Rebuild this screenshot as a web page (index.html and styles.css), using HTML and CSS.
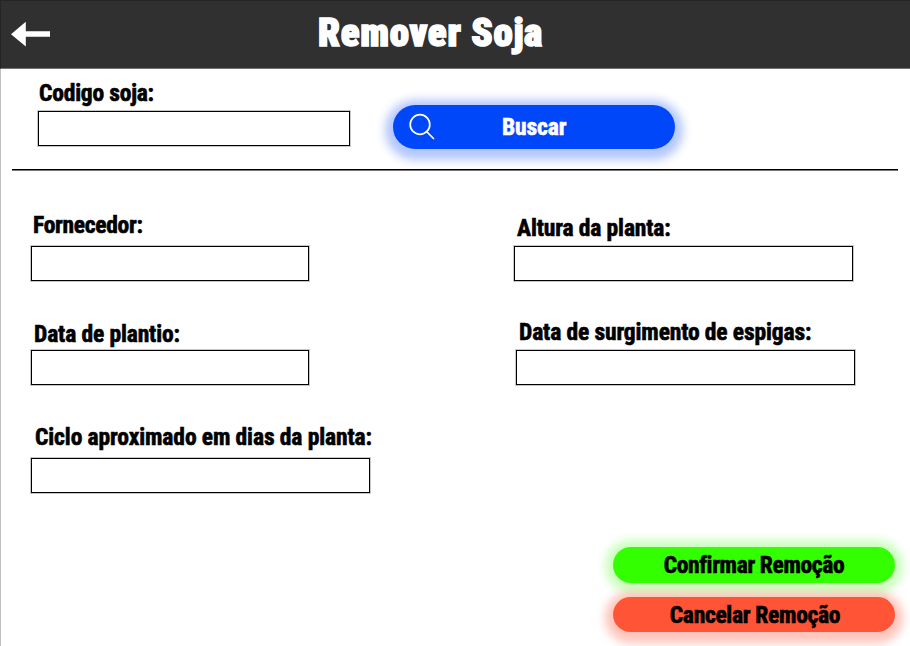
FILE: index.html
```html
<!DOCTYPE html>
<html lang="pt-BR">
<head>
<meta charset="utf-8">
<title>Remover Soja</title>
<link rel="stylesheet" href="styles.css">
</head>
<body>
<div class="app">
  <header class="topbar">
    <a class="back" href="#" aria-label="Voltar">
      <svg width="40" height="26" viewBox="0 0 40 26"><path d="M0 13.200 14.800.8V10.300H39V15.800H14.800V25.500Z" fill="#fff"/></svg>
    </a>
    <h1 class="title">Remover Soja</h1>
  </header>
  <section class="search">
    <div class="field search-field">
      <label class="label codigo" for="codigo">Codigo soja:</label>
      <input class="input" id="codigo">
    </div>
    <button class="btn buscar">
      <svg class="lens" width="28" height="28" viewBox="0 0 28 28" fill="none" stroke="#fff" stroke-width="1.700" stroke-linecap="round"><circle cx="12" cy="11.500" r="9.800"/><path d="M18.500 18.500 25.500 25.500"/></svg>
      <span class="btn-text">Buscar</span>
    </button>
  </section>
  <main class="form">
    <div class="column">
      <div class="field fornecedor"><label class="label" for="fornecedor">Fornecedor:</label><input class="input" id="fornecedor"></div>
      <div class="field plantio"><label class="label" for="plantio">Data de plantio:</label><input class="input" id="plantio"></div>
      <div class="field ciclo"><label class="label" for="ciclo">Ciclo aproximado em dias da planta:</label><input class="input" id="ciclo"></div>
    </div>
    <div class="column">
      <div class="field altura"><label class="label" for="altura">Altura da planta:</label><input class="input" id="altura"></div>
      <div class="field espigas"><label class="label" for="espigas">Data de surgimento de espigas:</label><input class="input" id="espigas"></div>
    </div>
  </main>
  <footer class="actions">
    <button class="btn confirm"><span class="btn-text">Confirmar Remoção</span></button>
    <button class="btn cancel"><span class="btn-text">Cancelar Remoção</span></button>
  </footer>
</div>
</body>
</html>
```
FILE: styles.css
```css
* { box-sizing: border-box; }
body {
  margin: 0;
  background: #fff;
  color: #000;
  font-family: "Roboto Condensed", "Liberation Sans Narrow", "Open Sans", sans-serif;
  overflow: hidden;
}
.app {
  height: 646px;
  display: flex;
  flex-direction: column;
  box-shadow: inset 1px 0 0 #bfbfbf;
}
.topbar {
  height: 69px;
  flex: none;
  display: flex;
  align-items: flex-start;
  background: #303030;
  border-top: 1px solid #252525;
  border-bottom: 1px solid #747474;
  border-left: 1px solid #252525;
}
.back { margin: 20px 0 0 10px; height: 26px; }
.back svg { display: block; }
.title {
  margin: 9px 0 0 267px;
  color: #fff;
  font-size: 39px;
  line-height: 46px;
  font-weight: 900;
  letter-spacing: .7px;
  white-space: nowrap;
  -webkit-text-stroke: 1.500px #fff;
}
.search {
  height: 101px;
  flex: none;
  display: flex;
  align-items: flex-start;
  gap: 43px;
  margin: 0 12px 1px;
  padding: 10px 0 0 26px;
  border-bottom: 1px solid #000;
  box-shadow: 0 1px 0 #777;
}
.field { display: flex; flex-direction: column; }
.label {
  height: 28px;
  padding-left: 3px;
  font-size: 23.500px;
  line-height: 28px;
  font-weight: 700;
  letter-spacing: -.12px;
  white-space: nowrap;
  -webkit-text-stroke: .600px #000;
}
.input {
  width: 278px;
  height: 35px;
  padding: 0 8px;
  border: 1px solid #000;
  border-radius: 0;
  outline: none;
  background: #fff;
  box-shadow: 0 0 0 1px rgba(0, 0, 0, .22);
  font: inherit;
}
.search-field { width: 312px; }
.search-field .label { height: 32px; padding-left: 1px; letter-spacing: -.2px; }
.search-field .input { width: 312px; }
.form { flex: none; height: 376px; display: flex; padding-left: 31px; }
.column { width: 483px; flex: none; padding-top: 39px; }
.column + .column { width: 345px; }
.fornecedor .label { height: 36px; padding-left: 2px; line-height: 30px; letter-spacing: -.3px; }
.plantio { margin-top: 39px; }
.plantio .label { height: 30px; }
.ciclo { margin-top: 38px; }
.ciclo .label { height: 35px; padding-left: 4px; letter-spacing: -.1px; }
.ciclo .input, .altura .input, .espigas .input { width: 339px; }
.altura { padding-top: 4px; }
.altura .label { height: 32px; }
.espigas { margin: 37px 0 0 2px; }
.espigas .label { height: 32px; padding-left: 3px; }
.actions {
  display: flex;
  flex-direction: column;
  align-items: flex-end;
  gap: 14px;
  padding-right: 15px;
}
.btn {
  width: 282px;
  height: 35.500px;
  flex: none;
  display: flex;
  align-items: center;
  justify-content: center;
  padding: 0;
  border: 0;
  border-radius: 22px;
  color: #000;
  font: 700 23.500px/28px "Roboto Condensed", "Liberation Sans Narrow", "Open Sans", sans-serif;
}
.btn-text { -webkit-text-stroke: .600px currentColor; letter-spacing: -.3px; white-space: nowrap; }
.buscar {
  height: 44px;
  margin-top: 26px;
  justify-content: flex-start;
  background: #0047fa;
  color: #fff;
  box-shadow: 0 3px 10px 8px rgba(0, 71, 250, .3);
}
.lens { margin-left: 15px; }
.buscar .btn-text { margin-left: 66px; letter-spacing: -.1px; }
.confirm { background: #3f0; box-shadow: 0 1px 10px 8px rgba(51, 255, 0, .27); }
.confirm .btn-text { letter-spacing: -.36px; }
.cancel { padding: 1px 0 0 2px; background: #ff5436; box-shadow: 0 3px 10px 8px rgba(255, 84, 54, .35); }
```
